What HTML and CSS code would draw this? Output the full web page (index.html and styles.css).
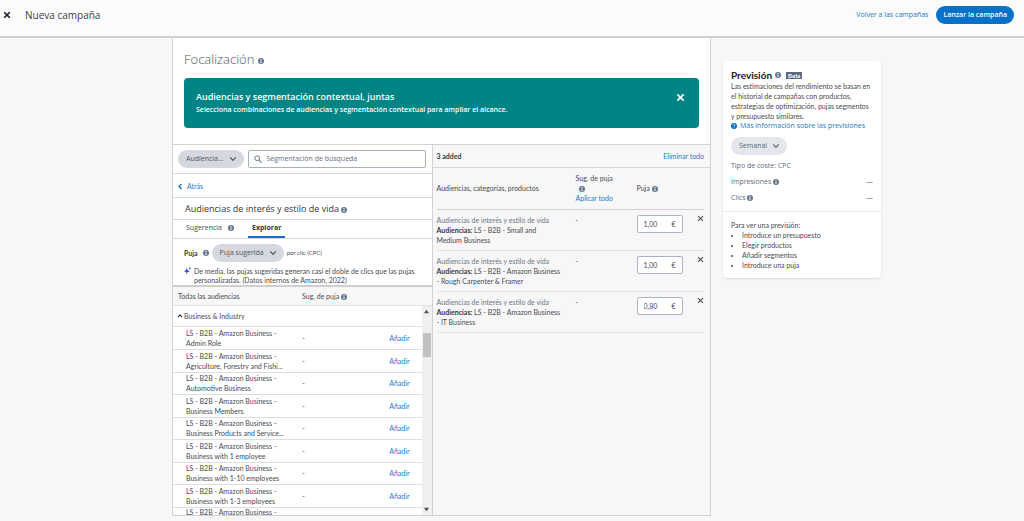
FILE: index.html
```html
<!DOCTYPE html>
<html lang="es">
<head>
<meta charset="utf-8">
<title>Nueva campaña</title>
<link rel="stylesheet" href="styles.css">
</head>
<body>
<svg class="defs" aria-hidden="true">
  <symbol id="info" viewBox="0 0 12 12"><circle cx="6" cy="6" r="6" fill="currentColor"/><path d="M5 5h2v5H5zM5 2h2v2H5z" fill="#fff"/></symbol>
  <symbol id="help" viewBox="0 0 12 12"><circle cx="6" cy="6" r="6" fill="currentColor"/><path d="M4.200 4.600a1.800 1.800 0 1 1 2.600 1.600Q6 6.600 6 7.500M6 8.600v1.400" fill="none" stroke="#fff" stroke-width="1.300"/></symbol>
  <symbol id="close" viewBox="0 0 10 10"><path d="M1.500 1.500l7 7M8.500 1.500l-7 7" fill="none" stroke="currentColor" stroke-width="2"/></symbol>
  <symbol id="remove" viewBox="0 0 10 10"><path d="M1.500 1.500l7 7M8.500 1.500l-7 7" fill="none" stroke="currentColor" stroke-width="1.500"/></symbol>
  <symbol id="down" viewBox="0 0 10 10"><path d="M1.500 3L5 6.800 8.500 3" fill="none" stroke="currentColor" stroke-width="1.500"/></symbol>
</svg>

<header class="topbar">
  <button class="icon-btn topbar-close" aria-label="Cerrar"><svg class="i8"><use href="#close"/></svg></button>
  <h1 class="topbar-title">Nueva campaña</h1>
  <a class="link" href="#">Volver a las campañas</a>
  <button class="primary">Lanzar la campaña</button>
</header>

<main class="layout">
  <section class="panel">
    <div class="intro">
      <h2 class="section-title">Focalización <svg class="info"><use href="#info"/></svg></h2>
      <div class="banner">
        <div class="banner-text">
          <h3>Audiencias y segmentación contextual, juntas</h3>
          <p>Selecciona combinaciones de audiencias y segmentación contextual para ampliar el alcance.</p>
        </div>
        <button class="icon-btn" aria-label="Descartar"><svg class="i9"><use href="#close"/></svg></button>
      </div>
    </div>

    <div class="columns">
      <div class="browse">
        <div class="search-row">
          <button class="pill">Audiencia... <svg class="i8"><use href="#down"/></svg></button>
          <label class="search">
            <svg class="i8" viewBox="0 0 10 10"><circle cx="4" cy="4" r="3" fill="none" stroke="#66758a" stroke-width="1.200"/><path d="M6.200 6.200L9.500 9.500" stroke="#66758a" stroke-width="1.400"/></svg>
            <input type="text" placeholder="Segmentación de búsqueda" aria-label="Segmentación de búsqueda">
          </label>
        </div>
        <div class="back-row"><a class="link" href="#"><svg class="i7" viewBox="0 0 10 10"><path d="M6.500 1.500L3 5l3.500 3.500" fill="none" stroke="currentColor" stroke-width="2"/></svg>Atrás</a></div>
        <h3 class="category">Audiencias de interés y estilo de vida <svg class="info"><use href="#info"/></svg></h3>
        <div class="tabs" role="tablist">
          <button class="tab" role="tab">Sugerencia <svg class="info"><use href="#info"/></svg></button>
          <button class="tab tab-on" role="tab" aria-selected="true">Explorar</button>
        </div>
        <div class="bid">
          <div class="bid-row">
            <b>Puja</b> <svg class="info"><use href="#info"/></svg>
            <button class="pill">Puja sugerida <svg class="i8"><use href="#down"/></svg></button>
            <small>por clic (CPC)</small>
          </div>
          <p class="tip"><svg class="i7" viewBox="0 0 10 10"><path d="M4 1.500l1.200 3.300L8.500 6 5.200 7.200 4 10 2.800 7.200 0 6l2.800-1.200zM8.300 0l.600 1.200L10 1.800l-1.100.600-.600 1.200-.600-1.200-1.200-.600 1.200-.600z" fill="#3340d8"/></svg><span>De media, las pujas sugeridas generan casi el doble de clics que las pujas personalizadas. (Datos internos de Amazon, 2022)</span></p>
        </div>
        <div class="list-head"><span>Todas las audiencias</span><span>Sug. de puja <svg class="info"><use href="#info"/></svg></span></div>
        <div class="list">
          <div class="list-view">
            <div class="group"><svg class="i6" viewBox="0 0 10 10"><path d="M1.500 7L5 3.200 8.500 7" fill="none" stroke="#333" stroke-width="2"/></svg>Business &amp; Industry</div>
            <table class="audiences">
              <tr><td>LS - B2B - Amazon Business -<br>Admin Role</td><td>-</td><td><a class="link" href="#">Añadir</a></td></tr>
              <tr><td>LS - B2B - Amazon Business -<br>Agriculture, Forestry and Fishi...</td><td>-</td><td><a class="link" href="#">Añadir</a></td></tr>
              <tr><td>LS - B2B - Amazon Business -<br>Automotive Business</td><td>-</td><td><a class="link" href="#">Añadir</a></td></tr>
              <tr><td>LS - B2B - Amazon Business -<br>Business Members</td><td>-</td><td><a class="link" href="#">Añadir</a></td></tr>
              <tr><td>LS - B2B - Amazon Business -<br>Business Products and Service...</td><td>-</td><td><a class="link" href="#">Añadir</a></td></tr>
              <tr><td>LS - B2B - Amazon Business -<br>Business with 1 employee</td><td>-</td><td><a class="link" href="#">Añadir</a></td></tr>
              <tr><td>LS - B2B - Amazon Business -<br>Business with 1-10 employees</td><td>-</td><td><a class="link" href="#">Añadir</a></td></tr>
              <tr><td>LS - B2B - Amazon Business -<br>Business with 1-3 employees</td><td>-</td><td><a class="link" href="#">Añadir</a></td></tr>
              <tr><td>LS - B2B - Amazon Business -</td><td></td><td></td></tr>
            </table>
          </div>
          <div class="scrollbar" aria-hidden="true">
            <svg class="arrow" viewBox="0 0 6 6"><path d="M3 1l3 4H0z" fill="#505050"/></svg>
            <span class="thumb"></span>
            <svg class="arrow" viewBox="0 0 6 6"><path d="M3 5L0 1h6z" fill="#505050"/></svg>
          </div>
        </div>
      </div>

      <div class="added">
        <div class="added-head"><b>3 added</b><a class="link" href="#">Eliminar todo</a></div>
        <div class="bids-wrap">
        <table class="bids">
          <thead><tr><th>Audiencias, categorías, productos</th><th>Sug. de puja<br><svg class="info info-in"><use href="#info"/></svg><br><a class="link" href="#">Aplicar todo</a></th><th>Puja <svg class="info"><use href="#info"/></svg></th><th></th></tr></thead>
          <tbody>
            <tr><td><span class="muted">Audiencias de interés y estilo de vida</span><br><b>Audiencias:</b> LS - B2B - Small and<br>Medium Business</td><td>-</td><td><label class="money"><input type="text" value="1,00" aria-label="Puja 1">€</label></td><td><button class="icon-btn" aria-label="Quitar"><svg class="i7"><use href="#remove"/></svg></button></td></tr>
            <tr><td><span class="muted">Audiencias de interés y estilo de vida</span><br><b>Audiencias:</b> LS - B2B - Amazon Business<br>- Rough Carpenter &amp; Framer</td><td>-</td><td><label class="money"><input type="text" value="1,00" aria-label="Puja 2">€</label></td><td><button class="icon-btn" aria-label="Quitar"><svg class="i7"><use href="#remove"/></svg></button></td></tr>
            <tr><td><span class="muted">Audiencias de interés y estilo de vida</span><br><b>Audiencias:</b> LS - B2B - Amazon Business<br>- IT Business</td><td>-</td><td><label class="money"><input type="text" value="0,80" aria-label="Puja 3">€</label></td><td><button class="icon-btn" aria-label="Quitar"><svg class="i7"><use href="#remove"/></svg></button></td></tr>
          </tbody>
        </table>
        </div>
      </div>
    </div>
  </section>

  <aside class="forecast">
    <div class="forecast-main">
      <h2>Previsión <svg class="info"><use href="#info"/></svg><span class="beta">Beta</span></h2>
      <p>Las estimaciones del rendimiento se basan en<br>el historial de campañas con productos,<br>estrategias de optimización, pujas segmentos<br>y presupuesto similares.</p>
      <a class="link more" href="#"><svg class="info"><use href="#help"/></svg>Más información sobre las previsiones</a>
      <button class="pill pill-light">Semanal <svg class="i8"><use href="#down"/></svg></button>
      <div class="metric">Tipo de coste: CPC</div>
      <div class="metric"><span>Impresiones <svg class="info"><use href="#info"/></svg></span><span>—</span></div>
      <div class="metric"><span>Clics <svg class="info"><use href="#info"/></svg></span><span>—</span></div>
    </div>
    <div class="forecast-todo">
      Para ver una previsión:
      <ul><li>Introduce un presupuesto</li><li>Elegir productos</li><li>Añadir segmentos</li><li>Introduce una puja</li></ul>
    </div>
  </aside>
</main>
</body>
</html>
```
FILE: styles.css
```css
* { box-sizing: border-box; }
body { margin: 0; background: #f7f7f7; color: #484b50; font: 7px/10px Lato, "Open Sans", sans-serif; }
h1, h2, h3, p, ul { margin: 0; padding: 0; font-weight: 400; }
button, input { font: inherit; color: inherit; }
button { cursor: pointer; }
table { border-collapse: collapse; table-layout: fixed; width: 100%; }
td, th { padding: 0; text-align: left; font-weight: 400; }
b { color: #33363a; }
.topbar, .section-title, .banner, .pill, .search, .category, .tab, .more, .metric { font-family: "Open Sans", "Noto Sans", sans-serif; }
.defs { position: absolute; width: 0; height: 0; }
.link { color: #2479c8; text-decoration: none; }
.info { width: 6px; height: 6px; color: #66758f; vertical-align: -1px; flex: none; }
.i6 { width: 6px; height: 6px; flex: none; }
.i7 { width: 7px; height: 7px; flex: none; }
.i8 { width: 8px; height: 8px; flex: none; }
.i9 { width: 9px; height: 9px; flex: none; }
.icon-btn { display: flex; padding: 0; border: 0; background: none; }

.topbar { display: flex; align-items: center; height: 38px; padding: 0 10px 7px 3px; background: #fbfbfb; border-bottom: 2px solid #d0d0d0; }
.topbar-close { color: #111c2e; }
.topbar-title { flex: 1; margin-left: 14px; font-size: 10px; line-height: 14px; color: #3c4045; }
.primary { margin-left: 8px; padding: 4px 7px; border: 0; border-radius: 9px; background: #0571c8; color: #fff; font-weight: 600; }

.layout { display: grid; grid-template-columns: minmax(0, 172fr) minmax(0, 539fr) minmax(0, 12fr) minmax(0, 158fr) minmax(0, 143fr); align-items: start; }
.panel { grid-column: 2; background: #fff; border: 1px solid #d2d2d2; border-top: 0; }
.intro { padding: 12px 11px 16px; }
.section-title { font-size: 13px; line-height: 18px; color: #55595d; font-weight: 300; }
.section-title .info { vertical-align: 0; }
.banner { display: flex; justify-content: space-between; align-items: flex-start; margin-top: 10px; padding: 12px 14px 12px 12px; border-radius: 4px; background: #008485; color: #fff; }
.banner-text h3 { font-size: 9px; line-height: 14px; font-weight: 600; }
.banner-text p { line-height: 12px; font-weight: 600; }
.banner .icon-btn { margin-top: 3px; }

.columns { display: grid; grid-template-columns: minmax(0, 259fr) minmax(0, 279fr); border-top: 1px solid #d2d2d2; }
.pill { display: flex; align-items: center; gap: 5px; height: 18px; padding: 0 7px 0 8px; border: 0; border-radius: 9px; background: #d5d9df; color: #4d5663; white-space: nowrap; }
.pill-light { background: #e3e6eb; color: #59677a; }
.search-row { display: flex; align-items: center; gap: 4px; height: 29px; padding: 0 6px 0 5px; border-bottom: 1px solid #d8d8d8; }
.search { display: flex; flex: 1; align-items: center; gap: 5px; height: 18px; padding: 0 5px; border: 1px solid #a8b0bd; border-radius: 2px; }
.search input { flex: 1; min-width: 0; padding: 0; border: 0; outline: 0; background: none; }
.search input::placeholder { color: #66707d; opacity: 1; }
.back-row { height: 24px; padding: 7px 4px; border-bottom: 1px solid #d8d8d8; }
.back-row .link { display: flex; align-items: center; gap: 3px; }
.category { height: 22px; padding: 4px 12px; border-bottom: 1px solid #d8d8d8; font-size: 9px; line-height: 14px; color: #33363a; }
.tabs { display: flex; gap: 13px; height: 19px; padding: 0 12px; border-bottom: 1px solid #d8d8d8; }
.tab { display: flex; align-items: center; gap: 6px; padding: 0 1px; border: 0; border-bottom: 2px solid transparent; background: none; }
.tab-on { padding: 0 4px; border-bottom-color: #1b6fc2; color: #33363a; font-weight: 700; }
.bid { padding: 5px 12px 0 11px; }
.bid-row { display: flex; align-items: center; gap: 3px; }
.bid-row b { margin-right: 2px; }
.bid-row small { font-size: 6px; }
.tip { display: flex; gap: 3px; margin-top: 5px; line-height: 9px; }
.list-head { display: grid; grid-template-columns: 124px 1fr; align-items: center; height: 21px; padding: 0 5px; background: #f7f7f7; border-top: 2px solid #cfcfcf; border-bottom: 1px solid #e2e2e2; }
.list { display: flex; height: 209px; }
.list-view { flex: 1; overflow: hidden; }
.group { display: flex; align-items: center; gap: 1px; height: 21px; padding-left: 4px; border-bottom: 1px solid #dedede; }
.audiences tr { height: 22px; border-bottom: 1px solid #dedede; }
.audiences tr:nth-child(even) { height: 23px; }
.audiences tr:last-child { vertical-align: top; line-height: 8px; }
.audiences td:nth-child(1) { width: 52%; padding-left: 13px; white-space: nowrap; }
.audiences td:nth-child(3) { width: 13%; }
.scrollbar { display: flex; flex-direction: column; align-items: center; width: 10px; padding: 3px 1px; background: #f0f0f0; }
.arrow { width: 5px; height: 5px; }
.thumb { width: 8px; height: 24px; margin: 19px 0 auto; background: #c1c1c1; }

.added { background: #f7f7f7; border-left: 1px solid #d2d2d2; }
.added-head { display: flex; align-items: center; justify-content: space-between; height: 23px; padding: 0 6px 0 4px; border-bottom: 1px solid #d8d8d8; }
.bids-wrap { padding: 0 6px 0 4px; }
.bids th:nth-child(1) { width: 139px; }
.bids th:nth-child(2) { width: 61px; }
.bids th:nth-child(4) { width: 15px; }
.bids th { height: 41px; border-bottom: 1px solid #d2d2d2; }
.bids td:first-child { white-space: nowrap; }
.bids td { height: 41px; padding-top: 5px; border-bottom: 1px solid #e2e2e2; vertical-align: top; }
.info-in { margin-left: 3px; }
.muted { color: #6b7686; }
.money { display: flex; align-items: center; width: 46px; height: 18px; padding: 0 6px; border: 1px solid #a8b3c6; border-radius: 2px; background: #fff; }
.money input { flex: 1; min-width: 0; padding: 0; border: 0; background: none; }
.bids .icon-btn { margin-left: 8px; }

.forecast { grid-column: 4; margin-top: 23px; border-radius: 4px; background: #fff; box-shadow: 0 1px 2px #0000001f; }
.forecast-main { padding: 8px; border-bottom: 1px solid #e8e8e8; }
.forecast h2 { display: flex; align-items: center; gap: 3px; font-size: 10px; line-height: 12px; font-weight: 700; color: #222; }
.beta { margin-left: 2px; padding: 0 2px; background: #5c6880; color: #fff; font-size: 6px; line-height: 7px; font-weight: 700; }
.forecast p { white-space: nowrap; }
.more { display: flex; align-items: center; gap: 3px; margin-bottom: 6px; white-space: nowrap; }
.more .info { color: #0571c8; }
.metric { display: flex; justify-content: space-between; margin-top: 6px; color: #5d6b80; }
.forecast-todo { padding: 8px; }
.forecast-todo ul { padding-left: 11px; }
```
